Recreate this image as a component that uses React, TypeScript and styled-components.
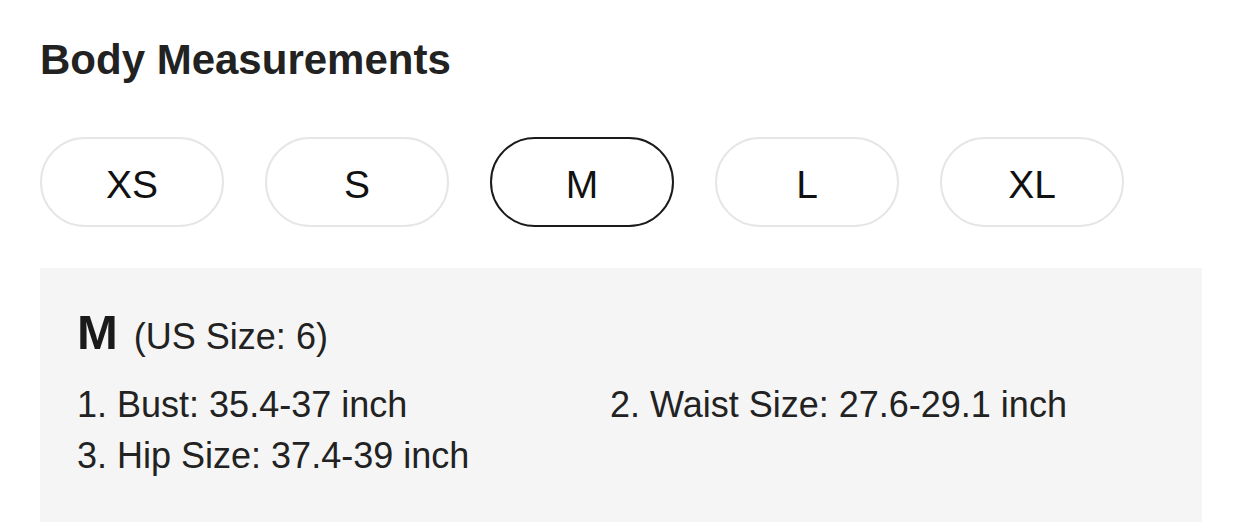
import React, { FC, useState } from 'react';
import styled, { createGlobalStyle } from 'styled-components';

// Styles
const GlobalStyle = createGlobalStyle`
  html, body {
    margin: 0;
    padding: 0;
    background: #ffffff;
    overflow: hidden;
  }

  body {
    font-family: 'Liberation Sans', Arial, Helvetica, sans-serif;
    color: #222222;
  }
`;

const Wrapper = styled.section`
  display: flex;
  flex-direction: column;
  width: 1162px;
  padding: 36px 40px 0;
`;

const Title = styled.h2`
  margin: 0;
  font-size: 42px;
  line-height: 48px;
  font-weight: 700;
  color: #222222;
`;

const SizeList = styled.ul`
  display: flex;
  gap: 41px;
  margin: 53px 0 0;
  padding: 0;
  list-style: none;
`;

const SizeButton = styled.button<{ $active: boolean }>`
  display: flex;
  align-items: center;
  justify-content: center;
  width: 184px;
  height: 90px;
  padding: 5px 0 0;
  border-radius: 45px;
  border: 2px solid ${({ $active }) => ($active ? '#1a1a1a' : '#e6e6e6')};
  background: #ffffff;
  font-family: inherit;
  font-size: 39px;
  color: #111111;
  cursor: pointer;
`;

const Panel = styled.div`
  display: flex;
  flex-direction: column;
  margin-top: 41px;
  padding: 38px 37px 60px;
  background: #f5f5f5;
`;

const PanelHead = styled.div`
  display: flex;
  align-items: baseline;
  gap: 16px;
`;

const SizeName = styled.span`
  font-size: 49px;
  line-height: 52px;
  font-weight: 700;
  color: #1a1a1a;
`;

const UsSize = styled.span`
  font-size: 36px;
  color: #222222;
`;

const Measures = styled.div`
  display: grid;
  grid-template-columns: 533px 1fr;
  row-gap: 8px;
  margin-top: 25px;
`;

const Measure = styled.p`
  margin: 0;
  font-size: 36px;
  line-height: 43px;
  color: #222222;
`;

// Data
const sizes = ['XS', 'S', 'M', 'L', 'XL'];

const measurements: Record<string, { us: number; items: string[] }> = {
  XS: { us: 2, items: ['Bust: 31.5-33.1 inch', 'Waist Size: 24-25.6 inch', 'Hip Size: 33.5-35 inch'] },
  S: { us: 4, items: ['Bust: 33.5-35 inch', 'Waist Size: 25.6-27.6 inch', 'Hip Size: 35.4-37 inch'] },
  M: { us: 6, items: ['Bust: 35.4-37 inch', 'Waist Size: 27.6-29.1 inch', 'Hip Size: 37.4-39 inch'] },
  L: { us: 8, items: ['Bust: 37.4-39 inch', 'Waist Size: 29.5-31.1 inch', 'Hip Size: 39.4-41 inch'] },
  XL: { us: 10, items: ['Bust: 39.4-41 inch', 'Waist Size: 31.5-33.1 inch', 'Hip Size: 41.3-43 inch'] },
};

// Component
const App: FC = () => {
  const [active, setActive] = useState('M');
  const current = measurements[active];

  return (
    <>
      <GlobalStyle />
      <Wrapper>
        <Title>Body Measurements</Title>
        <SizeList>
          {sizes.map((size) => (
            <li key={size}>
              <SizeButton $active={size === active} onClick={() => setActive(size)}>
                {size}
              </SizeButton>
            </li>
          ))}
        </SizeList>
        <Panel>
          <PanelHead>
            <SizeName>{active}</SizeName>
            <UsSize>(US Size: {current.us})</UsSize>
          </PanelHead>
          <Measures>
            {current.items.map((item, i) => (
              <Measure key={item}>
                {i + 1}. {item}
              </Measure>
            ))}
          </Measures>
        </Panel>
      </Wrapper>
    </>
  );
};

export default App;
